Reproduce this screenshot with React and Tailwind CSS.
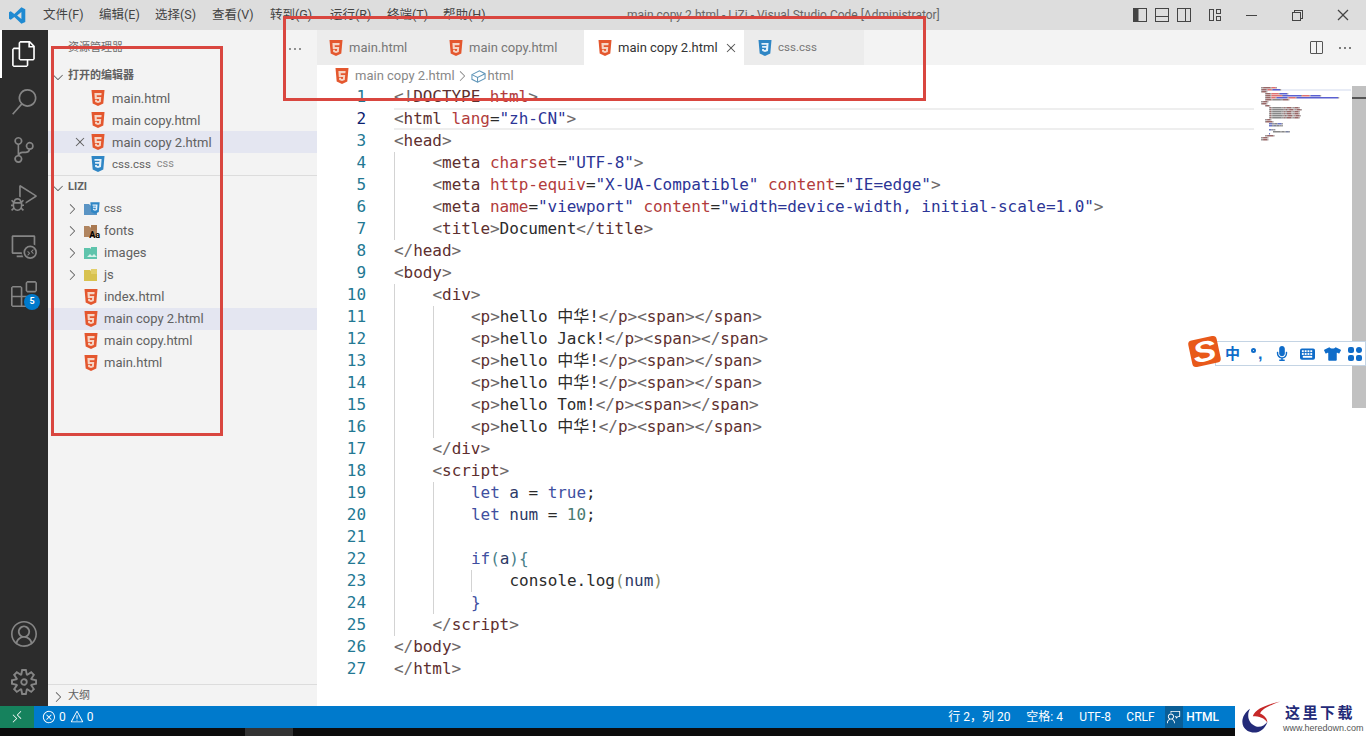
import React from "react";
import {
  VscFiles, VscSearch, VscSourceControl, VscDebugAlt, VscRemoteExplorer, VscExtensions,
  VscAccount, VscSettingsGear, VscChevronRight, VscChevronDown, VscClose, VscError,
  VscWarning, VscRemote, VscSplitHorizontal, VscEllipsis,
  VscChromeMinimize, VscChromeRestore, VscChromeClose, VscFeedback,
} from "react-icons/vsc";
import { FaMicrophone, FaTshirt } from "react-icons/fa";

const uiFont = "font-['Roboto','Noto_Sans_CJK_SC',sans-serif]";

function Html5({ className = "w-[14px] h-[16px]" }) {
  return (
    <svg viewBox="0 0 14 16" className={className}>
      <path d="M0.5 0h13l-1.2 13.6L7 16l-5.3-2.4z" fill="#e4572e" />
      <path d="M3.4 3h7.2l-.2 2.2H5.7l.1 1.7h4.4l-.4 5L7 13l-2.8-1.1-.2-2.2h2l.1 1 .9.3 1-.3.1-1.8H3.8z" fill="#f6d5c5" />
    </svg>
  );
}

function Css3({ className = "w-[14px] h-[16px]" }) {
  return (
    <svg viewBox="0 0 14 16" className={className}>
      <path d="M0.5 0h13l-1.2 13.6L7 16l-5.3-2.4z" fill="#2f86c5" />
      <path d="M3.4 3h7.2l-.6 7.9-3 1.1-2.8-1.1-.2-2h1.9l.1.9.9.3 1-.3.2-2H4.2l-.2-1.8h4.4l.1-1.2H3.6z" fill="#e3f0fa" />
    </svg>
  );
}

function FolderIcon({ color, tab }) {
  return (
    <svg viewBox="0 0 14 14" className="w-[14px] h-[14px]">
      <path d="M0 2h5l1.5 1.5H13V13H0z" fill={color} />
      <path d="M7 1h6v5H7z" fill={tab} />
    </svg>
  );
}

const folderIcons = {
  css: (
    <span className="relative block w-[14px] h-[14px]">
      <FolderIcon color="#5a94c4" tab="#5a94c4" />
      <Css3 className="absolute right-[-2px] top-[-1px] w-[10px] h-[14px]" />
    </span>
  ),
  fonts: (
    <span className="relative block w-[14px] h-[14px]">
      <FolderIcon color="#b08560" tab="#a97850" />
      <span className="absolute right-[-2px] bottom-[-2px] text-[9px] leading-[10px] font-bold text-black">Aa</span>
    </span>
  ),
  images: (
    <svg viewBox="0 0 14 14" className="w-[14px] h-[14px]">
      <path d="M0 2h6l1.5 1.5H13V13H0z" fill="#5ec4ac" />
      <path d="M7 1h6v4H7z" fill="#5ec4ac" />
      <path d="M3 11l3-3 2 2 2-2 3 3z" fill="#d6f2ea" />
    </svg>
  ),
  js: (
    <svg viewBox="0 0 14 14" className="w-[14px] h-[14px]">
      <path d="M0 2h6l1.5 1.5H13V13H0z" fill="#d8c24f" />
      <path d="M7 1h6v5H7z" fill="#e2cf6a" />
    </svg>
  ),
};

function Row({ active, indent, children }) {
  return (
    <div className={`flex items-center h-[22px] text-[13px] text-[#616161] ${active ? "bg-[#e4e6f1]" : ""} ${indent}`}>
      {children}
    </div>
  );
}

function Sidebar() {
  const open = [
    { name: "main.html", icon: <Html5 /> },
    { name: "main copy.html", icon: <Html5 /> },
    { name: "main copy 2.html", icon: <Html5 />, active: true },
    { name: "css.css", icon: <Css3 />, hint: "css" },
  ];
  const files = ["index.html", "main copy 2.html", "main copy.html", "main.html"];

  return (
    <aside className="w-[269px] shrink-0 flex flex-col bg-[#f3f3f3]">
      <div className="h-[35px] flex items-center justify-between pl-[20px] pr-[14px] pt-[2px] text-[11px] text-[#6f6f6f]">
        <span>资源管理器</span>
        <VscEllipsis className="w-4 h-4" />
      </div>
      <div className="h-[22px] flex items-center pt-[1px] text-[11px] font-bold text-[#616161]">
        <VscChevronDown className="w-4 h-4 mx-[2px]" />
        <span>打开的编辑器</span>
      </div>
      {open.map((f) => (
        <Row key={f.name} active={f.active} indent="pl-[24px]">
          <span className="w-[16px] flex justify-center">
            {f.active && <VscClose className="w-4 h-4" />}
          </span>
          <span className="w-[14px] ml-[3px] flex">{f.icon}</span>
          <span className={`ml-[7px] pt-[1px] ${f.hint ? "text-[11.5px]" : ""}`}>{f.name}</span>
          {f.hint && <span className="ml-[6px] pt-[1px] text-[11px] text-[#8a8a8a]">{f.hint}</span>}
        </Row>
      ))}
      <div className="h-[1px] bg-[#dcdcdc]" />
      <div className="h-[22px] flex items-center pt-[1px] text-[11px] font-bold text-[#616161]">
        <VscChevronDown className="w-4 h-4 mx-[2px]" />
        <span>LIZI</span>
      </div>
      {["css", "fonts", "images", "js"].map((name) => (
        <Row key={name} indent="pl-[16px]">
          <VscChevronRight className="w-4 h-4 text-[#616161]" />
          <span className="w-[14px] ml-[4px]">{folderIcons[name]}</span>
          <span className={`ml-[6px] ${name === "css" ? "text-[11.5px]" : ""}`}>{name}</span>
        </Row>
      ))}
      {files.map((name, i) => (
        <Row key={name} active={i === 1} indent="pl-[36px]">
          <span className="w-[14px]"><Html5 /></span>
          <span className="ml-[6px]">{name}</span>
        </Row>
      ))}
      <div className="flex-1" />
      <div className="h-[22px] border-t border-[#dcdcdc] flex items-center pt-[2px] text-[11px] text-[#616161]">
        <VscChevronRight className="w-4 h-4 mx-[2px]" />
        <span>大纲</span>
      </div>
    </aside>
  );
}

function ActivityBar() {
  const top = [VscSearch, VscSourceControl, VscDebugAlt, VscRemoteExplorer];
  return (
    <nav className="w-[48px] shrink-0 bg-[#2c2c2c] flex flex-col items-center text-[#858585]">
      <div className="w-full h-[48px] flex items-center justify-center border-l-2 border-white text-white">
        <VscFiles className="w-[26px] h-[26px] mr-[2px]" />
      </div>
      {top.map((Icon, i) => (
        <div key={i} className="h-[48px] flex items-center justify-center">
          <Icon className="w-[26px] h-[26px]" />
        </div>
      ))}
      <div className="relative h-[48px] flex items-center justify-center">
        <VscExtensions className="w-[26px] h-[26px]" />
        <span className="absolute right-[-3px] bottom-[8px] w-4 h-4 rounded-full bg-[#007acc] text-white text-[9px] font-bold flex items-center justify-center">5</span>
      </div>
      <div className="flex-1" />
      <div className="h-[48px] flex items-center justify-center"><VscAccount className="w-[26px] h-[26px]" /></div>
      <div className="h-[48px] flex items-center justify-center"><VscSettingsGear className="w-[26px] h-[26px]" /></div>
    </nav>
  );
}

function TitleBar() {
  const menus = [
    ["文件(F)", "w-[56px]"], ["编辑(E)", "w-[56px]"], ["选择(S)", "w-[57px]"], ["查看(V)", "w-[58px]"],
    ["转到(G)", "w-[60px]"], ["运行(R)", "w-[57px]"], ["终端(T)", "w-[56px]"], ["帮助(H)", "w-[56px]"],
  ];
  return (
    <header className="h-[30px] shrink-0 bg-[#dddddd] flex items-center text-[#444] relative">
      <div className="w-[35px] flex justify-center">
        <svg viewBox="0 0 24 24" className="w-[17px] h-[17px]">
          <path d="M17.5 0.5L23 3v18l-5.5 2.5L7.5 14l-5 4L0 16.5v-9L2.5 6l5 4zM17.5 7l-6 5 6 5z" fill="#1f8ad2" />
        </svg>
      </div>
      <div className="flex pl-[8px] text-[12.5px]">
        {menus.map(([m, w]) => <span key={m} className={`${w} whitespace-nowrap`}>{m}</span>)}
      </div>
      <span className="absolute left-[627px] top-[7px] text-[12px] leading-4 text-[#666] whitespace-nowrap">
        main copy 2.html - LiZi - Visual Studio Code [Administrator]
      </span>
      <div className="ml-auto flex items-center text-[#444]">
        <svg viewBox="0 0 16 16" className="w-4 h-4 mr-[6px]"><rect x="1.5" y="1.5" width="13" height="13" fill="none" stroke="currentColor" /><rect x="1.5" y="1.5" width="5" height="13" fill="currentColor" /></svg>
        <svg viewBox="0 0 16 16" className="w-4 h-4 mr-[6px]"><rect x="1.5" y="1.5" width="13" height="13" fill="none" stroke="currentColor" /><path d="M1.5 9.5h13" stroke="currentColor" /></svg>
        <svg viewBox="0 0 16 16" className="w-4 h-4 mr-[15px]"><rect x="1.5" y="1.5" width="13" height="13" fill="none" stroke="currentColor" /><path d="M9.5 1.5v13" stroke="currentColor" /></svg>
        <svg viewBox="0 0 16 16" className="w-4 h-4 mr-[5px]"><rect x="2.5" y="2.5" width="4" height="11" fill="none" stroke="currentColor" /><rect x="9.5" y="2.5" width="4" height="4" fill="none" stroke="currentColor" /><rect x="9.5" y="9.5" width="4" height="4" fill="none" stroke="currentColor" /></svg>
        <span className="w-[46px] flex justify-center"><VscChromeMinimize className="w-4 h-4" /></span>
        <span className="w-[46px] flex justify-center"><VscChromeRestore className="w-4 h-4" /></span>
        <span className="w-[46px] flex justify-center"><VscChromeClose className="w-4 h-4" /></span>
      </div>
    </header>
  );
}

function Tabs() {
  const tabs = [
    { name: "main.html", icon: <Html5 />, w: "w-[119px] pl-[12px]" },
    { name: "main copy.html", icon: <Html5 />, w: "w-[148px] pl-[13px]" },
    { name: "main copy 2.html", icon: <Html5 />, w: "w-[160px] pl-[14px]", active: true },
    { name: "css.css", icon: <Css3 />, w: "w-[120px] pl-[14px] text-[11.5px]" },
  ];
  return (
    <div className="h-[35px] shrink-0 bg-[#f3f3f3] flex items-stretch text-[13px]">
      {tabs.map((t) => (
        <div key={t.name} className={`${t.w} flex items-center ${t.active ? "bg-white text-[#333]" : "bg-[#ececec] text-[#777]"}`}>
          <span className="w-[14px] mr-[6px]">{t.icon}</span>
          <span className="whitespace-nowrap">{t.name}</span>
          {t.active && <VscClose className="w-4 h-4 ml-[5px] text-[#555]" />}
        </div>
      ))}
      <div className="ml-auto flex items-center pr-[13px] gap-[13px] text-[#555]">
        <VscSplitHorizontal className="w-4 h-4" />
        <VscEllipsis className="w-4 h-4" />
      </div>
    </div>
  );
}

function Breadcrumb() {
  return (
    <div className="h-[21px] shrink-0 flex items-center pl-[18px] pt-[1px] text-[13px] text-[#888]">
      <span className="w-[14px] mr-[6px]"><Html5 /></span>
      <span>main copy 2.html</span>
      <VscChevronRight className="w-4 h-4 ml-[-1px]" />
      <svg viewBox="0 0 16 16" className="w-[15px] h-[15px] mr-[2px] ml-[1px]" fill="none" stroke="#5f95b8" strokeWidth="1.1">
        <path d="M1 6l8-4 6 3v5l-8 4-6-3z" />
        <path d="M1 6l6 3 8-4M7 9v5" />
      </svg>
      <span>html</span>
    </div>
  );
}

const P = "text-[#6e6a6a]"; // brackets
const T = "text-[#5e2f2f]";
const A = "text-[#b23c3c]";
const S = "text-[#2c3596]";
const D = "text-[#2b2b2b]";
const K = "text-[#3f4fa0]";
const V = "text-[#2d3a66]";

const tag = (name, close) => [[P, close ? "</" : "<"], [T, name], [P, ">"]];
const open = (name) => [[P, "<"], [T, name]];
const attr = (n, v) => [[D, " "], [A, n], [D, "="], [S, `"${v}"`]];
const gt = [[P, ">"]];
const para = (text) => [...tag("p"), [D, text], ...tag("p", true), ...tag("span"), ...tag("span", true)];

const code = [
  { d: 0, t: [[P, "<!"], [T, "DOCTYPE"], [D, " "], [A, "html"], [P, ">"]] },
  { d: 0, t: [...open("html"), ...attr("lang", "zh-CN"), ...gt] },
  { d: 0, t: tag("head") },
  { d: 1, t: [...open("meta"), ...attr("charset", "UTF-8"), ...gt] },
  { d: 1, t: [...open("meta"), ...attr("http-equiv", "X-UA-Compatible"), ...attr("content", "IE=edge"), ...gt] },
  { d: 1, t: [...open("meta"), ...attr("name", "viewport"), ...attr("content", "width=device-width, initial-scale=1.0"), ...gt] },
  { d: 1, t: [...tag("title"), [D, "Document"], ...tag("title", true)] },
  { d: 0, t: tag("head", true) },
  { d: 0, t: tag("body") },
  { d: 1, t: tag("div") },
  { d: 2, t: para("hello 中华!") },
  { d: 2, t: para("hello Jack!") },
  { d: 2, t: para("hello 中华!") },
  { d: 2, t: para("hello 中华!") },
  { d: 2, t: para("hello Tom!") },
  { d: 2, t: para("hello 中华!") },
  { d: 1, t: tag("div", true) },
  { d: 1, t: tag("script") },
  { d: 2, t: [[K, "let"], [D, " "], [V, "a"], [D, " = "], [K, "true"], [D, ";"]] },
  { d: 2, t: [[K, "let"], [D, " "], [V, "num"], [D, " = "], ["text-[#4a7a70]", "10"], [D, ";"]] },
  { d: 2, t: [] },
  { d: 2, t: [[K, "if"], ["text-[#4a7f8a]", "("], [V, "a"], ["text-[#4a7f8a]", "){"]] },
  { d: 3, t: [[D, "console"], [D, "."], [D, "log"], ["text-[#8a8a60]", "("], [V, "num"], ["text-[#8a8a60]", ")"]] },
  { d: 2, t: [[K, "}"]] },
  { d: 1, t: tag("script", true) },
  { d: 0, t: tag("body", true) },
  { d: 0, t: tag("html", true) },
];

const miniColor = { [P]: "#a09898", [T]: "#986868", [A]: "#e07070", [S]: "#5a60d0", [D]: "#888888", [K]: "#6a76c4", [V]: "#7a82a0" };

function Minimap() {
  return (
    <svg viewBox="0 0 90 56" className="w-[90px] h-[56px] mt-[1px]">
      <rect x="0" y="2" width="90" height="2" fill="#e8ecf6" />
      {code.map((line, i) => {
        let x = line.d * 4;
        return line.t.map(([c, s], k) => {
          const w = s.length * 1.06;
          const r = <rect key={`${i}-${k}`} x={x} y={i * 2} width={w} height="1.5" fill={miniColor[c] || "#999"} />;
          x += w;
          return r;
        });
      })}
    </svg>
  );
}

function Editor() {
  return (
    <div className="flex-1 flex min-h-0 bg-white relative">
      <div className="w-[49px] shrink-0 text-right text-[16px] leading-[22px] text-[#237893] font-['DejaVu_Sans_Mono',monospace] tracking-[-0.05px]">
        {code.map((_, i) => (
          <div key={i} className={`h-[22px] ${i === 1 ? "text-[#0b216f]" : ""}`}>{i + 1}</div>
        ))}
      </div>
      <div className="w-[860px] shrink-0 ml-[28px] text-[16px] leading-[22px] font-['DejaVu_Sans_Mono','Noto_Sans_CJK_SC',monospace] tracking-[-0.05px]">
        {code.map((line, i) => (
          <div key={i} className={`h-[22px] flex whitespace-pre ${i === 1 ? "border-y-2 border-[#eeeeee] leading-[18px]" : ""}`}>
            {Array.from({ length: line.d }).map((_, k) => (
              <span key={k} className="w-[38.5px] shrink-0 border-l border-[#d3d3d3]" />
            ))}
            <span>
              {line.t.map(([c, s], k) => <span key={k} className={c}>{s}</span>)}
            </span>
          </div>
        ))}
      </div>
      <div className="w-[97px] shrink-0 pl-[7px]">
        <Minimap />
      </div>
      <div className="w-[14px] shrink-0 ml-auto">
        <div className="h-[322px] bg-[#c1c1c1] relative">
          <div className="h-[2px] bg-[#555] absolute top-[11px] inset-x-0" />
        </div>
      </div>
    </div>
  );
}

function StatusBar() {
  const items = [
    { text: "行 2，列 20", w: "w-[78px]" },
    { text: "空格: 4", w: "w-[53px]" },
    { text: "UTF-8", w: "w-[47px]" },
    { text: "CRLF", w: "w-[39px]" },
  ];
  return (
    <footer className="h-[22px] shrink-0 bg-[#007acc] text-white flex items-center text-[12px]">
      <div className="w-[34px] h-full bg-[#16825d] flex items-center justify-center">
        <VscRemote className="w-[14px] h-[14px]" />
      </div>
      <div className="flex items-center pl-[8px] gap-[3px]">
        <VscError className="w-[14px] h-[14px]" />
        <span>0</span>
        <VscWarning className="w-[14px] h-[14px] ml-[1px]" />
        <span>0</span>
      </div>
      <div className="ml-auto flex items-center h-full pr-[147px]">
        {items.map((it) => <span key={it.text} className={`${it.w} whitespace-nowrap`}>{it.text}</span>)}
        <span className="h-full flex items-center bg-[#0a5e96] px-[2px]">
          <VscFeedback className="w-[14px] h-[14px]" />
        </span>
        <span className="font-medium ml-[3px]">HTML</span>
      </div>
    </footer>
  );
}

function ImeBar() {
  return (
    <div className="absolute left-[1215px] top-[341px] w-[151px] h-[25px] bg-white border border-[#c4d4e4] flex items-center pl-[9px] text-[#0f6cc9] z-20">
      <span className="text-[15px] font-bold w-[26px] font-['Noto_Sans_CJK_SC',sans-serif]">中</span>
      <span className="w-[25px] flex items-start gap-[2px]">
        <span className="w-[5px] h-[5px] mt-[1px] rounded-full border-2 border-[#0f6cc9]" />
        <span className="text-[16px] font-black leading-[14px] font-['Liberation_Sans',sans-serif]">,</span>
      </span>
      <FaMicrophone className="w-[12px] h-[15px] mr-[12px]" />
      <svg viewBox="0 0 16 12" className="w-[15px] h-[12px] mr-[9px]">
        <rect x="0" y="0" width="16" height="12" rx="2" fill="currentColor" />
        {[2, 5, 8, 11].map((x) => [2, 5].map((y) => <rect key={`${x}-${y}`} x={x} y={y} width="2" height="2" fill="#fff" />))}
        <rect x="3" y="8" width="10" height="2" fill="#fff" />
      </svg>
      <FaTshirt className="w-[17px] h-[16px] mr-[7px]" />
      <svg viewBox="0 0 14 14" className="w-[14px] h-[14px]">
        <rect x="0" y="0" width="6" height="6" rx="2" fill="currentColor" />
        <circle cx="11" cy="3" r="3" fill="currentColor" />
        <rect x="0" y="8" width="6" height="6" rx="2" fill="currentColor" />
        <rect x="8" y="8" width="6" height="6" rx="2" fill="currentColor" />
      </svg>
    </div>
  );
}

function SogouLogo() {
  return (
    <div className="absolute left-[1190px] top-[338px] w-[29px] h-[27px] bg-[#e8591a] rounded-[4px] -rotate-12 flex items-center justify-center z-30">
      <span className="text-white text-[28px] leading-none font-black italic scale-x-125 font-['Liberation_Sans',sans-serif]">S</span>
    </div>
  );
}

function Watermark() {
  return (
    <div className="absolute right-0 bottom-0 w-[131px] h-[36px] bg-white flex z-20">
      <svg viewBox="0 0 46 38" className="w-[42px] h-[36px] ml-[5px] shrink-0">
        <path d="M11 9C2 15 -1 27 8 33c9 5 19 0 22-10-3 4-8 7-13 5C9 25 7 16 11 9z" fill="#232a78" />
        <path d="M14 17C17 8 31 4 44 1 33 5 24 9 22 14c5 2 8 6 8 10-3-5-9-7-16-7z" fill="#c62828" />
      </svg>
      <div className="flex-1 min-w-0 flex flex-col pt-[2px] pl-[1px]">
        <span className="text-[15px] leading-[20px] font-bold tracking-[2.5px] pl-[2px] whitespace-nowrap text-[#232a78] font-['Noto_Sans_CJK_SC',serif]">这里下载</span>
        <span className="text-[9px] leading-[12px] whitespace-nowrap text-[#555] font-['Liberation_Sans',sans-serif]">www.heredown.com</span>
      </div>
    </div>
  );
}

export default function App() {
  return (
    <div className={`relative h-screen w-full overflow-hidden flex flex-col bg-white ${uiFont}`}>
      <TitleBar />
      <div className="flex-1 flex min-h-0">
        <ActivityBar />
        <Sidebar />
        <main className="flex-1 flex flex-col min-w-0">
          <Tabs />
          <Breadcrumb />
          <Editor />
        </main>
      </div>
      <StatusBar />
      <div className="h-[8px] shrink-0 bg-[#0c0c0c] pl-[245px]">
        <div className="w-[48px] h-full bg-[#333333]" />
      </div>

      {/* annotations drawn on top of the screenshot */}
      <div className="absolute left-[51px] top-[46px] w-[172px] h-[390px] border-[3px] border-[#d9463f] z-10" />
      <div className="absolute left-[283px] top-[16px] w-[643px] h-[85px] border-[3px] border-[#d9463f] z-10" />

      <ImeBar />
      <SogouLogo />
      <Watermark />
    </div>
  );
}
